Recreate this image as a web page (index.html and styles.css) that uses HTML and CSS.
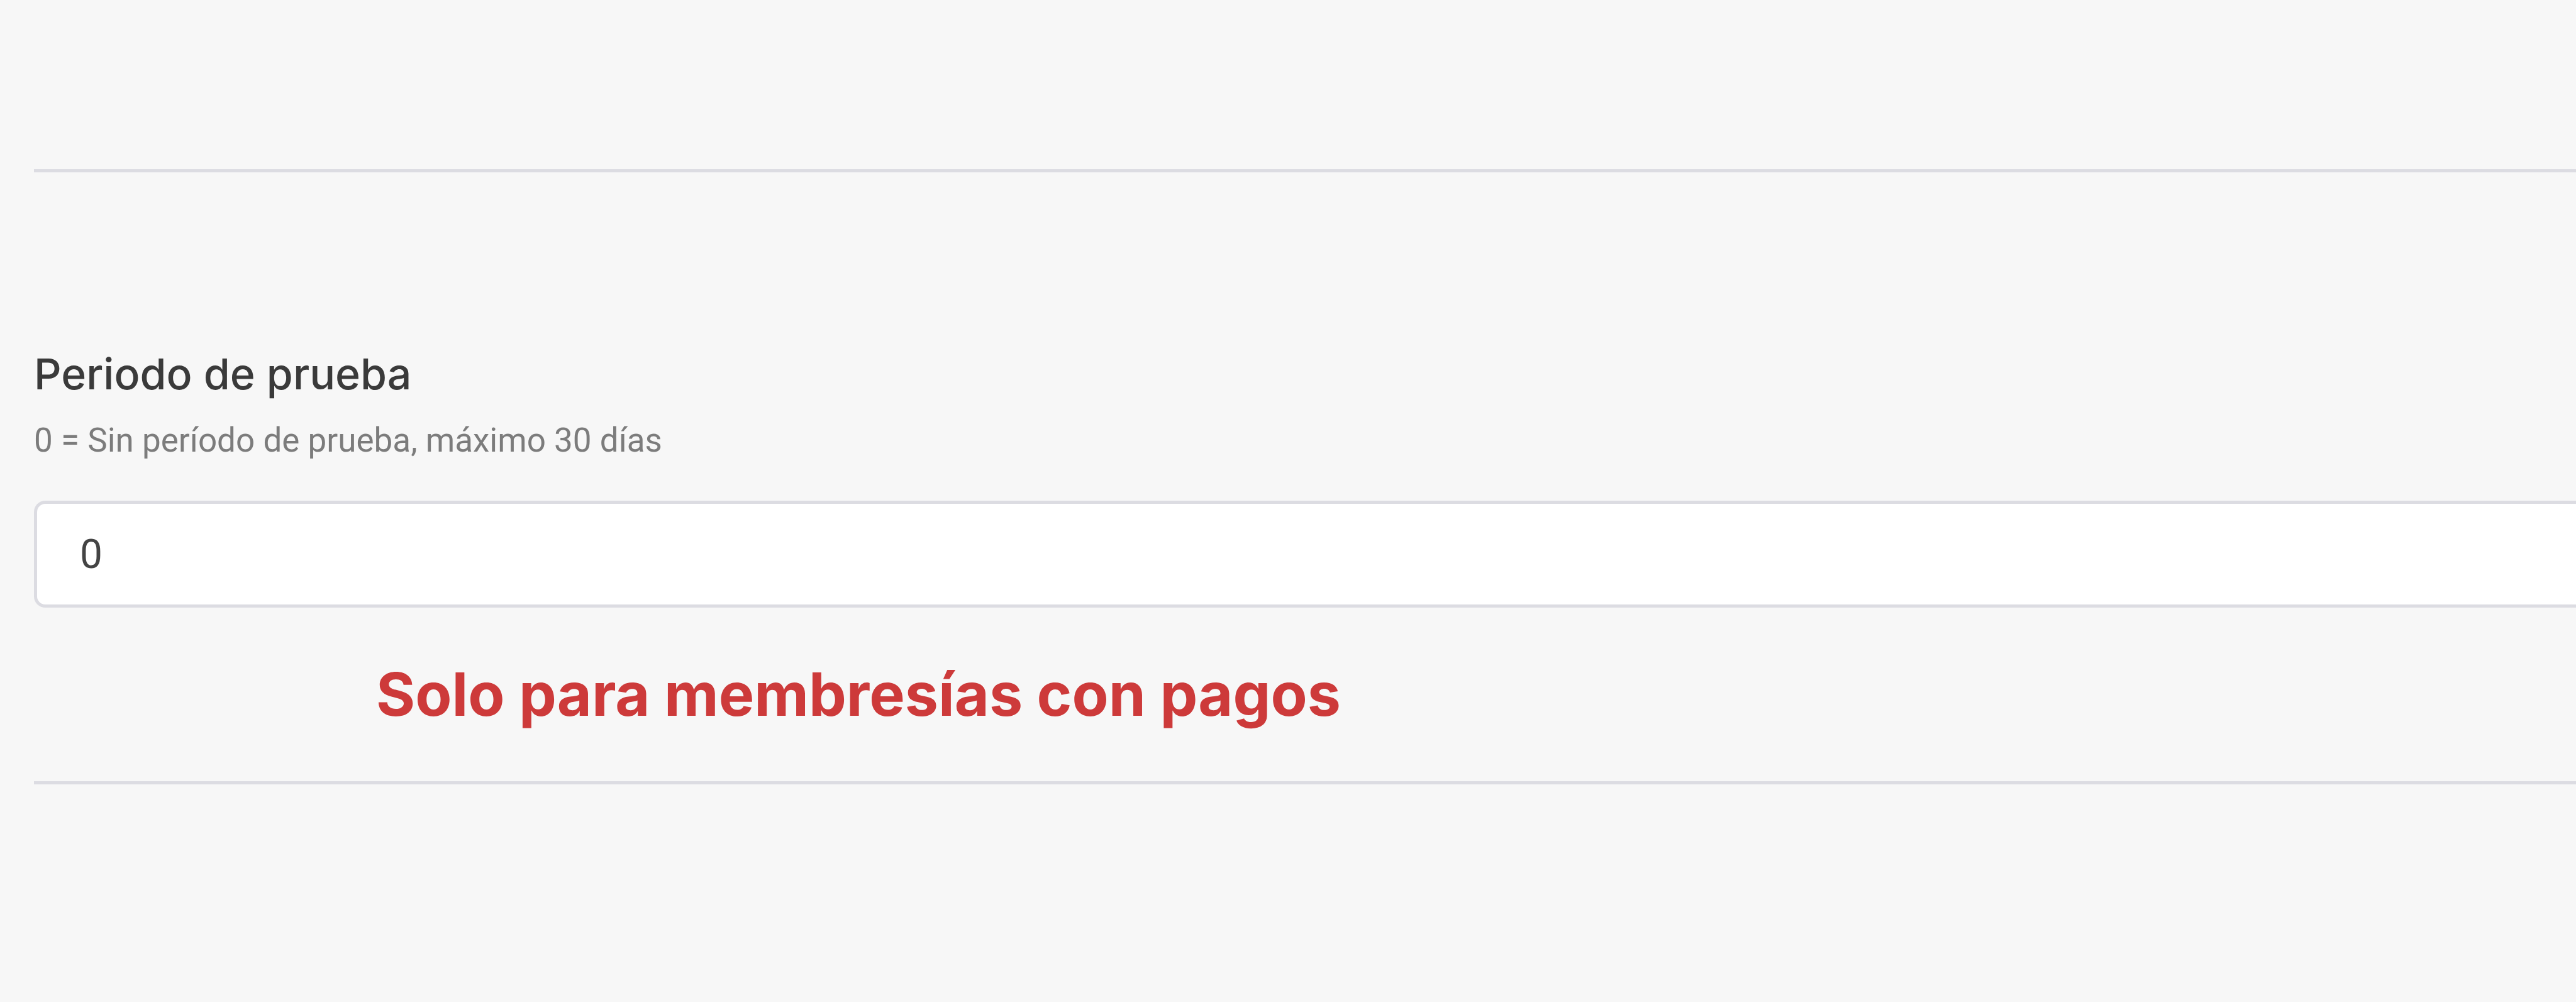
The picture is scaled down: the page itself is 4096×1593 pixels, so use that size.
FILE: index.html
```
<!DOCTYPE html>
<html lang="es">
<head>
    <meta charset="UTF-8">
    <meta name="viewport" content="width=device-width, initial-scale=1.0">
    <title>Periodo de prueba</title>
    <link rel="stylesheet" href="styles.css">
</head>
<body>
    <form class="form-section">
        <!-- Trial period field -->
        <div class="form-group">
            <label for="trial">Periodo de prueba</label>
            <p class="hint" id="trial-hint">0 = Sin período de prueba, máximo 30 días</p>
            <input type="text" inputmode="numeric" id="trial" name="trial" value="0" aria-describedby="trial-hint">
        </div>
        <p class="note">Solo para membresías con pagos</p>
    </form>
</body>
</html>
```

FILE: styles.css
```
* {
    box-sizing: border-box;
}
body {
    margin: 0;
    padding: 269px 0 0 54px;
    font-family: Inter, "Liberation Sans", sans-serif;
    background-color: #f7f7f7;
    color: #3a3a3a;
}
.form-section {
    padding: 272px 0 78px;
    border-top: 5px solid #dcdce2;
    border-bottom: 5px solid #dcdce2;
}
.form-group {
    display: flex;
    flex-direction: column;
}
.form-group label {
    font-size: 68px;
    line-height: 96px;
    font-weight: 500;
}
.hint {
    margin: 18px 0 56px;
    font-family: Roboto, "Liberation Sans", sans-serif;
    font-size: 53px;
    line-height: 80px;
    color: #7c7c7c;
}
/* The field runs off the right side of the page */
.form-group input {
    width: 100%;
    height: 170px;
    padding: 0 68px;
    border: 5px solid #dcdce2;
    border-right: none;
    border-radius: 18px 0 0 18px;
    background-color: #fff;
    font-family: Roboto, "Liberation Sans", sans-serif;
    font-size: 64px;
    color: #444;
}
.note {
    margin: 78px 0 0 544px;
    font-size: 95px;
    line-height: 120px;
    font-weight: 700;
    color: #cd3a3a;
}
```
